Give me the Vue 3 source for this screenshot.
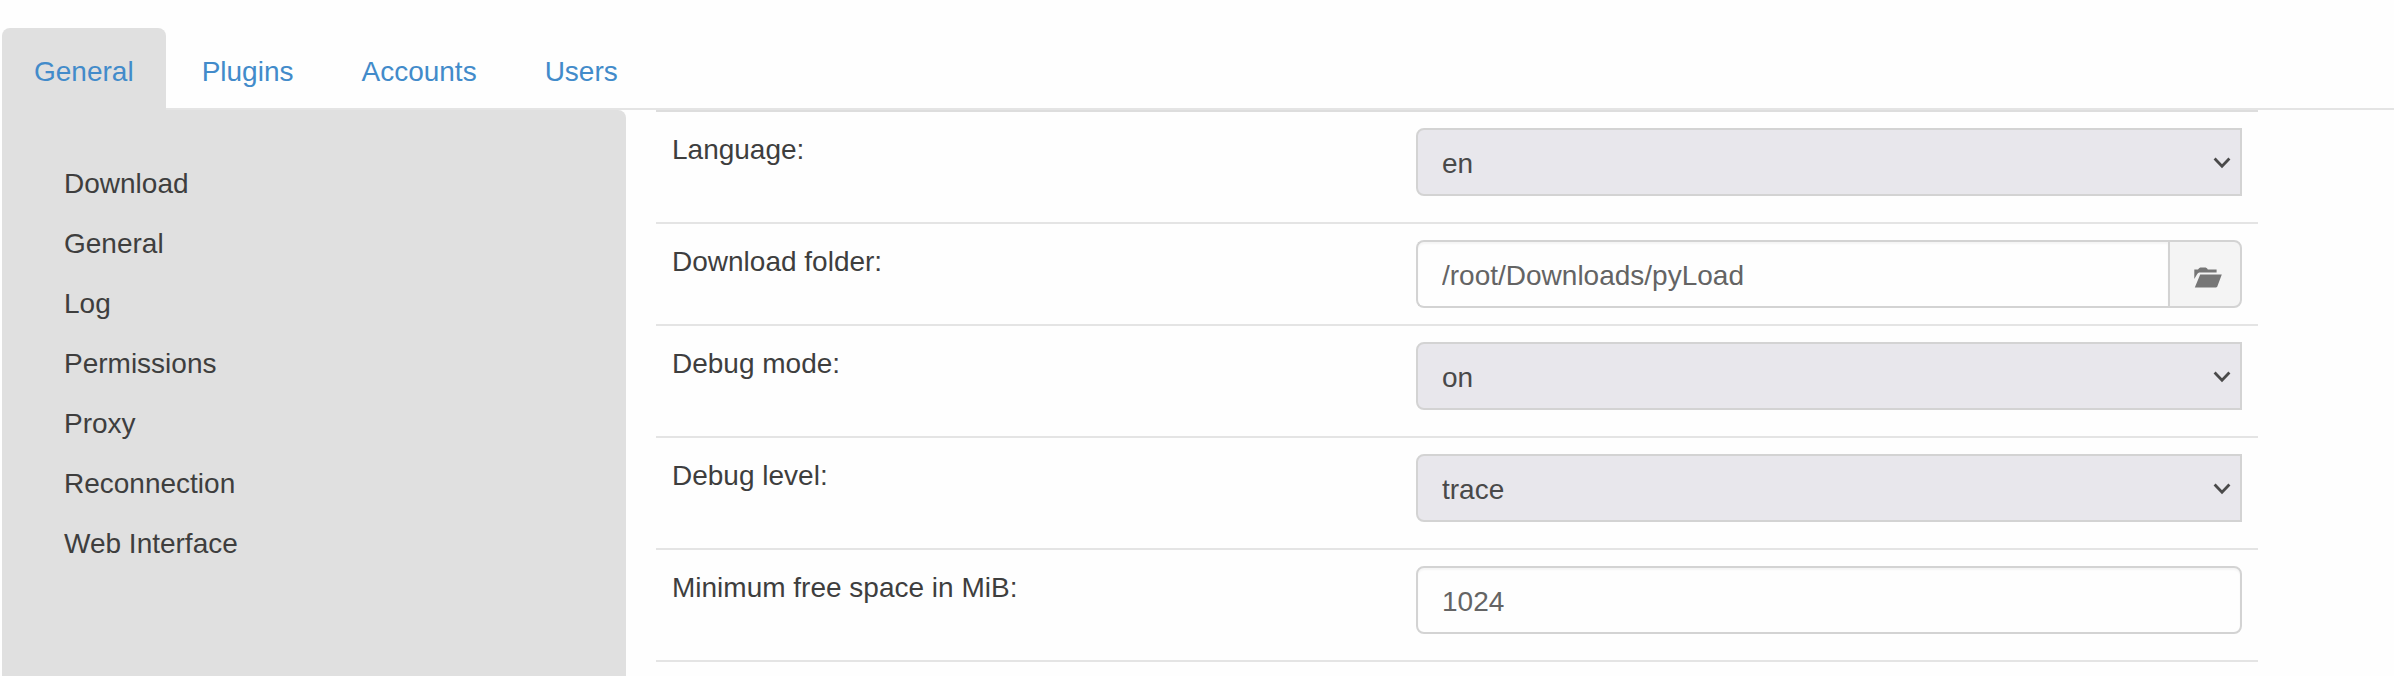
<script setup>
import { ref } from 'vue'

const tabs = ['General', 'Plugins', 'Accounts', 'Users']
const activeTab = ref('General')
const sections = ['Download', 'General', 'Log', 'Permissions', 'Proxy', 'Reconnection', 'Web Interface']
const options = ref([
  { label: 'Language:', type: 'select', value: 'en' },
  { label: 'Download folder:', type: 'folder', value: '/root/Downloads/pyLoad' },
  { label: 'Debug mode:', type: 'select', value: 'on' },
  { label: 'Debug level:', type: 'select', value: 'trace' },
  { label: 'Minimum free space in MiB:', type: 'text', value: '1024' },
])
</script>

<template>
  <div class="settings">
    <nav class="tabs">
      <a v-for="tab in tabs" :key="tab" class="tab" :class="{ active: tab === activeTab }" @click="activeTab = tab">{{ tab }}</a>
    </nav>
    <div class="body">
      <aside class="sidebar">
        <a v-for="section in sections" :key="section" class="section">{{ section }}</a>
      </aside>
      <main class="options">
        <div v-for="option in options" :key="option.label" class="row" :class="option.type">
          <label class="label">{{ option.label }}</label>
          <div class="control">
            <template v-if="option.type === 'select'">
              <select class="field dropdown">
                <option>{{ option.value }}</option>
              </select>
              <svg class="chevron" viewBox="0 0 18 12"><path d="M1.6 1.6 L9 9.2 L16.4 1.6" /></svg>
            </template>
            <input v-else v-model="option.value" class="field" type="text" />
            <button v-if="option.type === 'folder'" class="browse" type="button">
              <svg viewBox="0 0 28 21">
                <path d="M0.3 12 V2.6 H4 C4.8 0.9 5.8 0.4 7.5 0.4 H10.5 C12.2 0.4 13 0.9 13.8 2.4 H22.6 V5.4 H6.2 C4.5 5.4 3.8 5.9 3.1 7.2 Z" />
                <path d="M6.2 7.4 H27.8 L23.4 19.3 C23.2 20 22.8 20.4 22 20.4 H0.8 Z" />
              </svg>
            </button>
          </div>
        </div>
      </main>
    </div>
  </div>
</template>

<style>
body {
  margin: 0;
  overflow: hidden;
  background: #fefefe;
}
</style>

<style scoped>
.settings {
  display: flex;
  flex-direction: column;
  box-sizing: border-box;
  height: 676px;
  padding: 28px 0 0 2px;
  overflow: hidden;
  color: #3e3e3e;
  font: 28px/40px "Liberation Sans", Arial, sans-serif;
}
.tabs {
  display: flex;
  flex: none;
  gap: 4px;
  box-sizing: border-box;
  height: 82px;
  border-bottom: 2px solid #e4e4e4;
}
.tab {
  box-sizing: border-box;
  height: 82px;
  padding: 24px 32px 0;
  border-radius: 8px 8px 0 0;
  color: #428bca;
  cursor: pointer;
}
.tab.active {
  background: #e0e0e0;
}
.body {
  display: flex;
  flex: 1;
  min-height: 0;
}
.sidebar {
  flex: none;
  display: flex;
  flex-direction: column;
  gap: 20px;
  box-sizing: border-box;
  width: 624px;
  padding: 54px 0 0 62px;
  border-radius: 0 8px 0 0;
  background: #e0e0e0;
}
.options {
  flex: none;
  width: 1602px;
  margin-left: 30px;
}
.row {
  display: grid;
  grid-template-columns: 744px 826px;
  box-sizing: border-box;
  height: 112px;
  padding: 16px 16px 0;
  border-top: 2px solid #e4e4e4;
}
.row:first-child {
  border-top-color: #dddddd;
}
.row:last-child {
  height: 114px;
  border-bottom: 2px solid #e4e4e4;
}
.row.folder {
  height: 102px;
}
.label {
  padding-top: 2px;
}
.control {
  position: relative;
  display: flex;
  height: 68px;
}
.field {
  flex: 1;
  min-width: 0;
  box-sizing: border-box;
  height: 68px;
  margin: 0;
  padding: 4px 24px 0;
  border: 2px solid #d3d3d3;
  border-radius: 8px;
  outline: none;
  background: #fefefe;
  box-shadow: inset 0 2px 2px rgba(0, 0, 0, 0.04);
  color: #646464;
  font: inherit;
}
.dropdown {
  appearance: none;
  border-radius: 8px 0 0 8px;
  background: #e8e7ec;
  box-shadow: none;
  color: #494949;
}
.chevron {
  position: absolute;
  top: 29px;
  right: 11px;
  width: 18px;
  height: 12px;
  fill: none;
  stroke: #4a4a4a;
  stroke-width: 2.8;
}
.folder .field {
  border-right: 0;
  border-radius: 8px 0 0 8px;
}
.browse {
  flex: none;
  display: flex;
  align-items: center;
  justify-content: center;
  box-sizing: border-box;
  width: 74px;
  height: 68px;
  padding: 6px 0 0 5px;
  border: 2px solid #d3d3d3;
  border-radius: 0 8px 8px 0;
  background: #f4f4f4;
}
.browse svg {
  width: 28px;
  height: 21px;
  fill: #767676;
}
</style>
